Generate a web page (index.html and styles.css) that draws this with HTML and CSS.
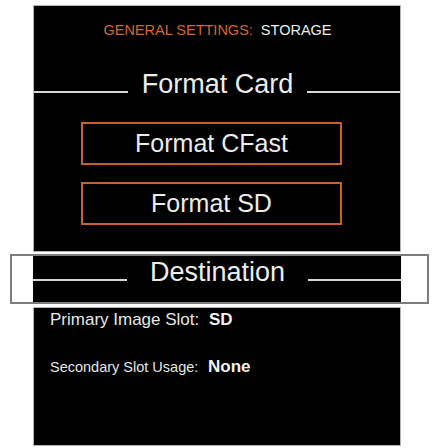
FILE: index.html
```html
<!DOCTYPE html>
<html lang="en">
<head>
    <meta charset="UTF-8">
    <meta name="viewport" content="width=device-width, initial-scale=1.0">
    <title>General Settings: Storage</title>
    <link rel="stylesheet" href="styles.css">
</head>
<body>
    <div class="page">
        <div class="panel panel-top">
            <div class="menu-header">
                <span class="menu-group">GENERAL SETTINGS:</span>
                <span class="menu-page">STORAGE</span>
            </div>
            <div class="section-title title-format">
                <span class="rule"></span>
                <span class="title-text">Format Card</span>
                <span class="rule"></span>
            </div>
            <button class="format-button first">Format CFast</button>
            <button class="format-button">Format SD</button>
        </div>

        <div class="highlight-box">
            <div class="panel-strip">
                <div class="section-title title-dest">
                    <span class="rule"></span>
                    <span class="title-text">Destination</span>
                    <span class="rule"></span>
                </div>
            </div>
        </div>

        <div class="panel panel-bottom">
            <div class="setting-row primary">
                <span class="setting-label">Primary Image Slot:</span>
                <span class="setting-value">SD</span>
            </div>
            <div class="setting-row secondary">
                <span class="setting-label small">Secondary Slot Usage:</span>
                <span class="setting-value">None</span>
            </div>
        </div>
    </div>
</body>
</html>
```

FILE: styles.css
```css
body {
    margin: 0;
    background-color: #fff;
    font-family: "Liberation Sans", Arial, sans-serif;
    color: #ececec;
}

.page {
    padding-top: 5px;
}

.panel {
    margin-left: 33px;
    width: 368px;
    box-sizing: border-box;
    background: #000;
    border: 1px solid #b4b4b4;
}

.panel-top {
    height: 247px;
    padding-top: 16px;
    display: flex;
    flex-direction: column;
}

.menu-header {
    font-size: 14.5px;
    line-height: 17px;
    text-align: center;
    padding-left: 1px;
}

.menu-group {
    color: #d4682c;
}

.menu-page {
    margin-left: 4px;
    color: #ececec;
}

.section-title {
    display: grid;
    grid-template-columns: 94px 1fr 93px;
    align-items: end;
    font-size: 27px;
    line-height: 27px;
}

.title-format {
    margin-top: 32px;
}

.title-text {
    text-align: center;
}

.rule {
    height: 2px;
    margin-bottom: 5px;
    background: #d6d6d6;
}

.format-button {
    display: block;
    width: 261px;
    height: 43px;
    margin-left: 47px;
    padding: 0;
    box-sizing: border-box;
    background: #000;
    border: 2px solid #c8622b;
    color: #ececec;
    font-family: "Liberation Sans", Arial, sans-serif;
    font-size: 25px;
    line-height: 39px;
    text-align: center;
}

.format-button.first {
    margin-top: 24px;
    margin-bottom: 17px;
}

.highlight-box {
    margin: 2px 0 0 10px;
    width: 419px;
    box-sizing: border-box;
    border: 2px solid #7c7c7c;
}

.panel-strip {
    margin-left: 21px;
    width: 368px;
    height: 46px;
    box-sizing: border-box;
    padding-top: 3px;
    background: #000;
}

.panel-bottom {
    margin-top: 3px;
    height: 139px;
    padding: 2px 0 0 16px;
}

.setting-row {
    font-size: 17px;
    line-height: 20px;
}

.setting-row.secondary {
    margin-top: 27px;
}

.setting-label {
    color: #e6e6e6;
}

.setting-label.small {
    font-size: 14.5px;
}

.setting-value {
    margin-left: 5px;
    font-weight: bold;
    color: #f2f2f2;
}
```
